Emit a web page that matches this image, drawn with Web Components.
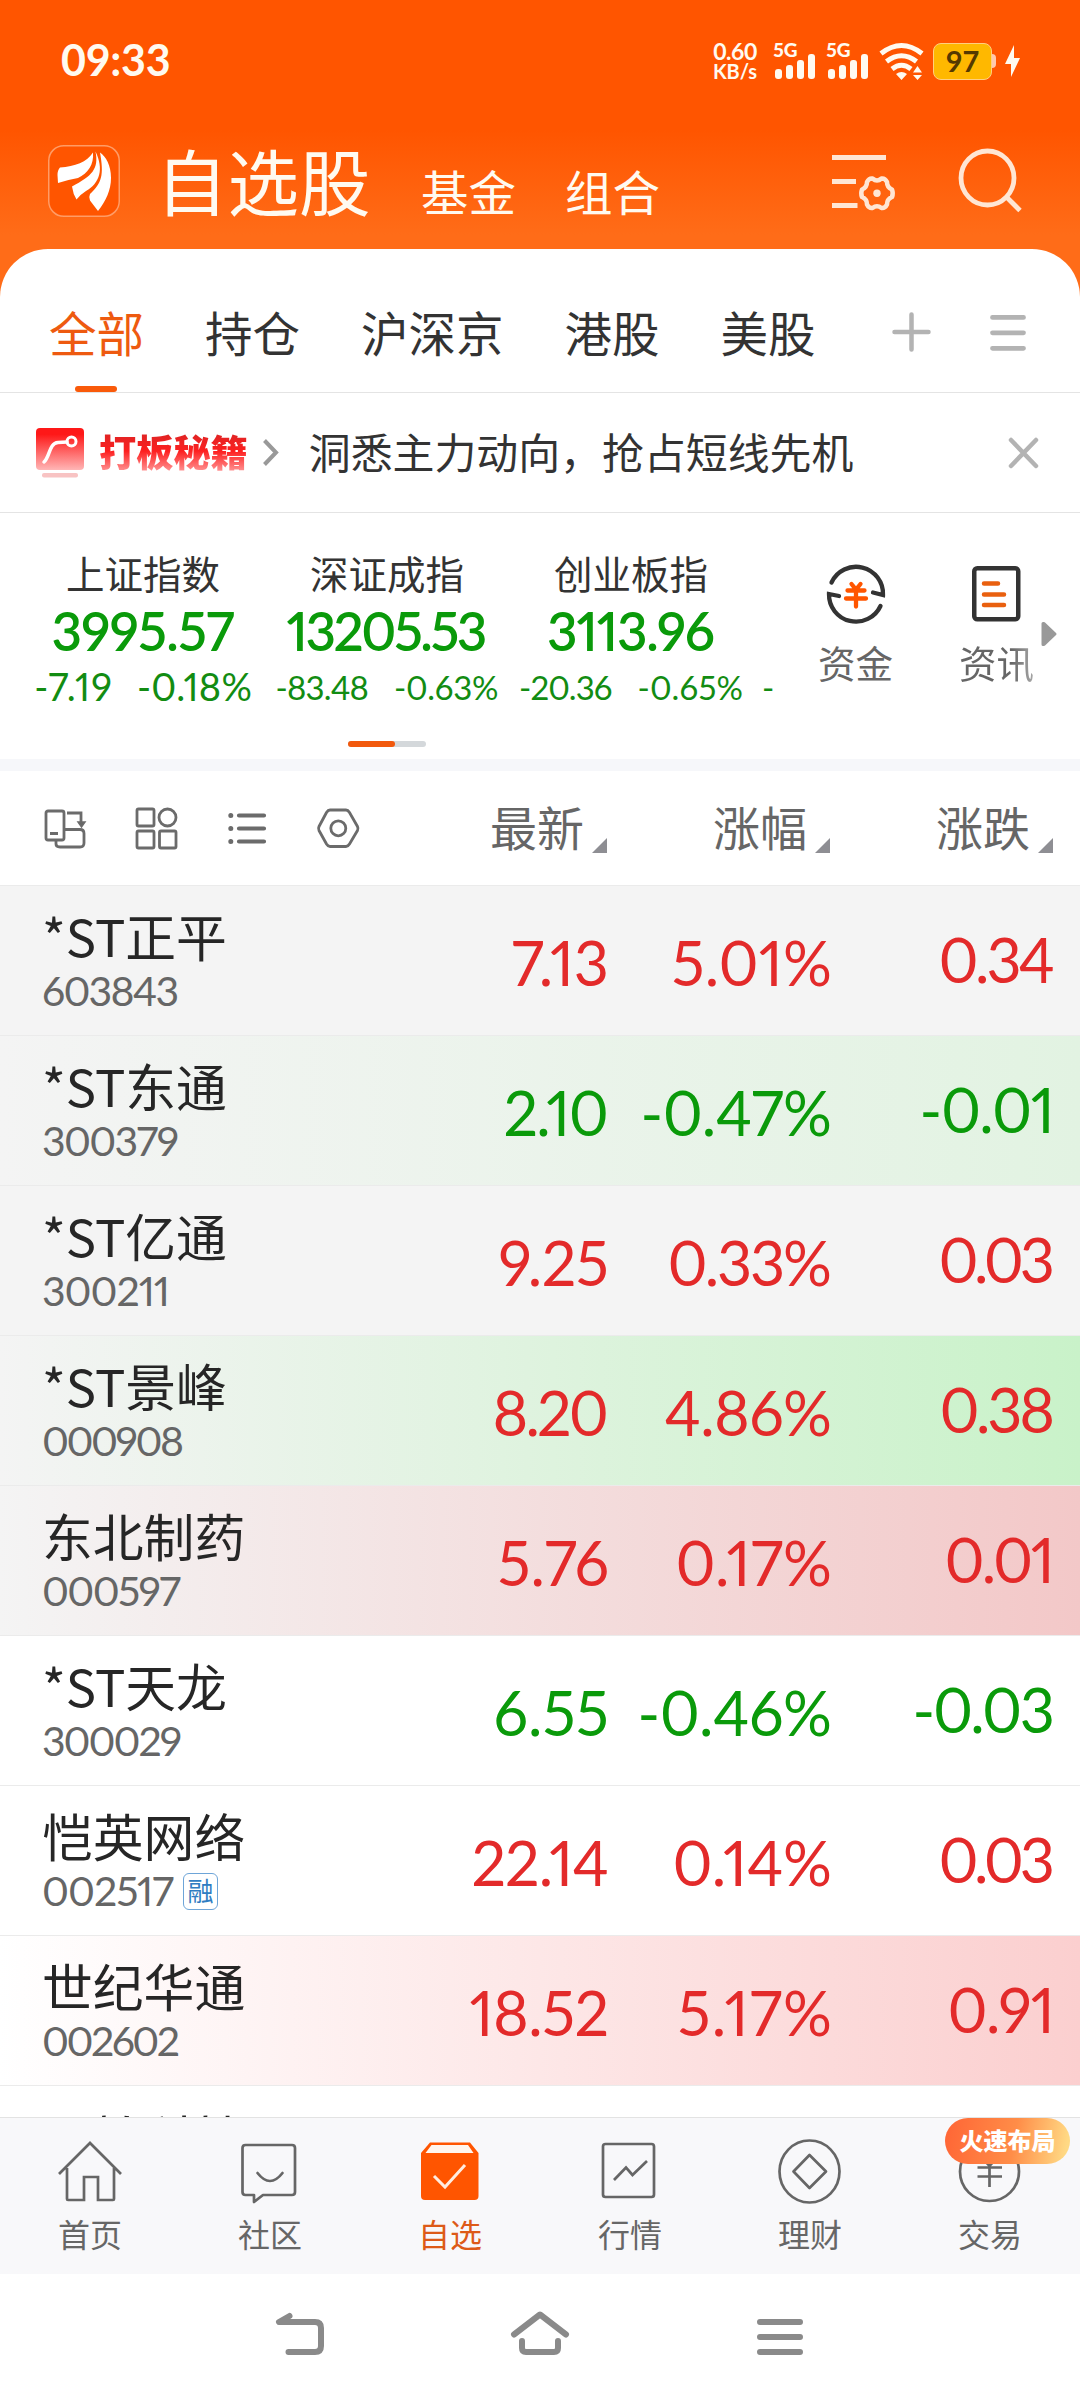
<!DOCTYPE html>
<html lang="zh-CN">
<head>
<meta charset="utf-8">
<title>自选股</title>
<style>
  body {
    margin: 0;
    width: 1080px;
    height: 2400px;
    overflow: hidden;
    background: #fff;
    color: #333;
    font-family: "Noto Sans CJK SC", sans-serif;
    --num: Lato, "Noto Sans CJK SC", sans-serif;
    --orange: #ee5a10;
    --up: #e32a2a;
    --down: #0a9a0a;
  }
</style>
</head>
<body>
<stock-app></stock-app>

<script>
class BaseElement extends HTMLElement {
  constructor() {
    super();
    this.shadow = this.attachShadow({ mode: "open" });
  }

  attr(name) {
    return this.getAttribute(name) || '';
  }

  connectedCallback() {
    this.shadow.innerHTML = `
      <style>
        :host { display: block; box-sizing: border-box; }
        * { box-sizing: border-box; }
        svg { display: block; overflow: visible; flex: none; }
        ${this.renderStyle()}
      </style>
      ${this.renderHTML()}
    `;
  }

  renderStyle() {
    return '';
  }
}

// number that is tracked in or out to fill the given ink width
class FitNum extends BaseElement {
  connectedCallback() {
    super.connectedCallback();
    const width = Number(this.attr('w'));
    const text = this.shadow.querySelector('span');
    if (!width || text.textContent.length < 2) return;
    const bearing = parseFloat(getComputedStyle(this).fontSize) * 0.075;
    const spacing = (width + bearing - text.getBoundingClientRect().width) / (text.textContent.length - 1);
    text.style.letterSpacing = spacing + 'px';
    text.style.marginRight = -spacing + 'px';
  }

  renderStyle() {
    return `
      :host { display: inline-block; white-space: nowrap; font-variant-numeric: proportional-nums; }
      span { display: inline-block; }
    `;
  }

  renderHTML() {
    return `<span>${this.attr('value')}</span>`;
  }
}
customElements.define("fit-num", FitNum);

// "7.13/93" -> value and ink width
function num(pair) {
  const [value, w] = (pair || '').split('/');
  return value ? `<fit-num value="${value}" w="${w}"></fit-num>` : '';
}

class StatusBar extends BaseElement {
  renderStyle() {
    return `
      :host {
        display: flex;
        align-items: center;
        height: 122px;
        padding: 0 60px 0 61px;
        color: #fffaf0;
        font-family: var(--num);
        font-weight: 700;
      }
      .time { flex: 1; font-size: 43px; line-height: 50px; letter-spacing: -.3px; margin-top: -2px; }
      .speed { width: 48px; text-align: center; line-height: 20px; font-size: 23px; margin-right: 14px; letter-spacing: -.5px; }
      .speed small { display: block; font-size: 20px; letter-spacing: 0; }
      .signal { width: 53px; height: 36px; }
      .signal div { font-size: 19px; line-height: 14px; height: 10px; letter-spacing: -.3px; font-weight: 900; }
      .wifi { margin: 0 9px 0 0; }
      .battery {
        width: 59px;
        height: 37px;
        border-radius: 8px;
        border: 1px solid #ffcf80;
        background: #ffb800;
        color: #553900;
        font-size: 29px;
        line-height: 34px;
        text-align: center;
      }
      .nub { width: 4px; height: 14px; background: #ffc9ad; border-radius: 0 4px 4px 0; margin-right: 9px; }
    `;
  }

  renderSignal() {
    return `
      <div class="signal">
        <div>5G</div>
        <svg width="44" height="26" viewBox="0 0 44 26" fill="#fffaf0">
          <rect x="2" y="16" width="7" height="10" rx="3"/>
          <rect x="13" y="12" width="7" height="14" rx="3"/>
          <rect x="24" y="7" width="7" height="19" rx="3"/>
          <rect x="35" y="1" width="7" height="25" rx="3"/>
        </svg>
      </div>
    `;
  }

  renderHTML() {
    return `
      <div class="time">09:33</div>
      <div class="speed">0.60<small>KB/s</small></div>
      ${this.renderSignal()}
      ${this.renderSignal()}
      <svg class="wifi" width="45" height="37" viewBox="0 0 45 37" fill="none" stroke="#fffaf0" stroke-width="5">
        <path d="M2 10.5Q22.500 -5.500 43 10.500M7.500 18.500Q22.500 7 37.500 18.500M13 26Q22.500 18.500 32 26"/>
        <path d="M17 31Q22.500 27 28 31L22.500 37ZM34 29.500L38.500 23L43 29.500ZM34 32L38.500 37L43 32Z" fill="#fffaf0" stroke="none"/>
      </svg>
      <div class="battery">97</div>
      <div class="nub"></div>
      <svg width="15" height="32" viewBox="0 0 15 32" fill="#fffaf0"><path d="M9 0V13H15L6 32V19H0Z"/></svg>
    `;
  }
}
customElements.define("status-bar", StatusBar);

class AppHeader extends BaseElement {
  renderStyle() {
    return `
      :host { display: flex; align-items: flex-start; height: 127px; padding: 0 60px 0 48px; color: #fffaf0; }
      .logo { margin-top: 23px; }
      h1 { margin: 22px 0 0 36px; font-size: 71.500px; line-height: 70px; font-weight: 400; width: 216px; flex: none; white-space: nowrap; }
      span { font-size: 47.500px; line-height: 48px; margin: 45px 0 0 49px; width: 95px; flex: none; }
      .gear { margin: 32px 0 0 172px; }
      .search { margin: 26px 0 0 64px; }
    `;
  }

  renderHTML() {
    return `
      <svg class="logo" width="72" height="72" viewBox="0 0 72 72">
        <rect x=".75" y=".75" width="70.500" height="70.500" rx="15" fill="#ff5500" stroke="#ff9c66" stroke-width="1.500"/>
        <g fill="#fff">
          <path d="M45 7.500C39 17 27 21.500 12 22.500Q9.500 25 9.500 30L10 38Q21 34.500 30 33C40 28 46 20 45 7.500Z"/>
          <path d="M47.500 6.500C51 24 44 31 24 41.500Q25 49 28.500 54.500Q33 49 38 46C52 38 56 24 47.500 6.500Z"/>
          <path d="M52 7.500C56 30 54 38 42 49Q40.500 52 42 55.500L50 66C58 56 63 45 63 33C63 20 58 12 52 7.500Z"/>
        </g>
      </svg>
      <h1>自选股</h1>
      <span>基金</span>
      <span>组合</span>
      <svg class="gear" width="63" height="60" viewBox="0 0 63 60" fill="none" stroke="#ffe6d4" stroke-width="5">
        <path d="M0 3.500H54M0 27.500H24M0 51.500H25.500"/>
        <path stroke-width="4.500" stroke-linejoin="round" d="M40.500 24.500Q45 28.500 49.500 24.500Q53 24 55 28Q55 33.500 60 35.500Q61.500 39.500 60 43Q55 45 55 50.500Q53 54.500 49.500 54Q45 50.500 40.500 54Q37 54.500 35 50.500Q35 45 30 43Q28.500 39.500 30 35.500Q35 33.500 35 28Q37 24 40.500 24.500Z"/>
        <circle cx="45" cy="39.300" r="3.700" fill="#ffe6d4" stroke="none"/>
      </svg>
      <svg class="search" width="64" height="66" viewBox="0 0 64 66" fill="none" stroke="#ffe6d4" stroke-width="4.800">
        <ellipse cx="28.500" cy="30" rx="26.500" ry="27"/>
        <path d="M47 48.500L61 62.500"/>
      </svg>
    `;
  }
}
customElements.define("app-header", AppHeader);

class FilterTabs extends BaseElement {
  renderStyle() {
    return `
      :host {
        display: flex;
        height: 144px;
        background: #fff;
        border-radius: 48px 48px 0 0;
        border-bottom: 1px solid #e4e4e4;
        padding: 0 53px 0 49px;
        font-size: 47.500px;
      }
      div { display: flex; flex-direction: column; align-items: center; justify-content: flex-end; margin-right: 61px; }
      b { font-weight: 400; line-height: 60px; height: 60px; margin-bottom: 24px; white-space: nowrap; }
      i { width: 42px; height: 6px; border-radius: 3px; }
      .on { color: var(--orange); }
      .on i { background: #f95a0a; margin-right: 1px; }
      .add { margin: 63px 59px 0 15px; }
      .menu { margin-top: 66px; }
    `;
  }

  renderHTML() {
    const tabs = ['全部', '持仓', '沪深京', '港股', '美股'];
    return `
      ${tabs.map((t, i) => `<div class="${i === 0 ? 'on' : ''}"><b>${t}</b><i></i></div>`).join('')}
      <svg class="add" width="39" height="40" viewBox="0 0 39 40" stroke="#b3b3b3" stroke-width="4.500" stroke-linecap="round"><path d="M2.500 20H36.500M19.500 2.500V37.500"/></svg>
      <svg class="menu" width="36" height="36" viewBox="0 0 36 36" stroke="#b3b3b3" stroke-width="4.800" stroke-linecap="round"><path d="M2.500 2.400H33.500M2.500 17.800H33.500M2.500 33.300H33.500"/></svg>
    `;
  }
}
customElements.define("filter-tabs", FilterTabs);

class PromoBanner extends BaseElement {
  renderStyle() {
    return `
      :host { display: flex; align-items: center; height: 120px; border-bottom: 1px solid #e4e4e4; padding: 0 42px 0 36px; }
      b {
        margin: -3px 15px 0 15px;
        font-size: 37.200px;
        font-weight: 900;
        line-height: 56px;
        background: linear-gradient(#e02424 20%, #fd1f1f 50%, #ff8f8f 85%);
        -webkit-background-clip: text;
        color: transparent;
      }
      span { flex: 1; margin-left: 31px; font-size: 41.900px; line-height: 60px; margin-top: -4px; }
    `;
  }

  renderHTML() {
    return `
      <svg width="48" height="50" viewBox="0 0 48 50">
        <defs><linearGradient id="g" x1="0" y1="0" x2="0" y2="1"><stop offset=".15" stop-color="#fe1818"/><stop offset="1" stop-color="#ffb6b6"/></linearGradient></defs>
        <rect width="48" height="42" rx="4" fill="url(#g)"/>
        <rect x="6" y="45" width="36" height="4.500" rx="2" fill="#f8c3c3"/>
        <path d="M8 34C14 29 13 15 22 14.500L31 14" fill="none" stroke="#fff" stroke-width="3.500" stroke-linecap="round"/>
        <circle cx="35.500" cy="13.500" r="4.500" fill="none" stroke="#fff" stroke-width="3"/>
      </svg>
      <b>打板秘籍</b>
      <svg width="15" height="27" viewBox="0 0 15 27" fill="none" stroke="#999" stroke-width="4"><path d="M1.500 1.500L13 13.500L1.500 25.500"/></svg>
      <span>洞悉主力动向，抢占短线先机</span>
      <svg width="29" height="30" viewBox="0 0 29 30" stroke="#b3b3b3" stroke-width="4.500" stroke-linecap="round"><path d="M2 2L27 28M27 2L2 28"/></svg>
    `;
  }
}
customElements.define("promo-banner", PromoBanner);

class IndexCard extends BaseElement {
  renderStyle() {
    return `
      :host { width: 244px; flex: none; text-align: center; font-family: var(--num); color: #128c12; }
      p { margin: 0; font: 38.500px/48px "Noto Sans CJK SC", sans-serif; color: #333; }
      strong { display: block; font-size: 53px; line-height: 60px; margin-top: 5px; font-weight: 600; color: var(--down); }
      div { display: flex; justify-content: center; gap: 25px; line-height: 44px; height: 44px; margin-top: 2px; font-size: 33px; padding-top: 2px; }
      :host([big]) div { font-size: 38px; padding-top: 1px; }
    `;
  }

  renderHTML() {
    return `
      <p>${this.attr('name')}</p>
      <strong>${num(this.attr('value'))}</strong>
      <div>${num(this.attr('diff'))}${num(this.attr('rate'))}</div>
    `;
  }
}
customElements.define("index-card", IndexCard);

class IndexStrip extends BaseElement {
  renderStyle() {
    return `
      :host { height: 258px; border-bottom: 12px solid #f6f7fa; padding-top: 25px; }
      .row { display: flex; }
      .cards { display: flex; width: 776px; padding: 10px 0 0 21px; overflow: hidden; height: 182px; flex: none; }
      .next { font: 33px/44px var(--num); color: #128c12; padding: 117px 0 0 9px; flex: none; }
      .tool { width: 141px; text-align: center; font-size: 37.500px; line-height: 50px; color: #666; flex: none; }
      .tool svg { margin: 26px auto 13px; }
      .tool:nth-child(2) { margin-left: 9px; }
      .fade { background: linear-gradient(90deg, #666 70%, #a5a5a5 98%); -webkit-background-clip: text; color: transparent; }
      .dots { width: 78px; height: 6px; border-radius: 3px; margin: 21px 0 0 348px; background: #d4d8db; }
      .dots i { display: block; width: 47px; height: 6px; border-radius: 3px; background: #f2590d; }
      .more { margin: 83px 0 0 -26px; }
    `;
  }

  renderHTML() {
    return `
      <div class="row">
        <div class="cards">
          <index-card big name="上证指数" value="3995.57/179" diff="-7.19/75" rate="-0.18%/112"></index-card>
          <index-card name="深证成指" value="13205.53/197" diff="-83.48/91" rate="-0.63%/102"></index-card>
          <index-card name="创业板指" value="3113.96/164" diff="-20.36/91" rate="-0.65%/103"></index-card>
          <span class="next">-</span>
        </div>
        <div class="tool">
          <svg width="60" height="60" viewBox="0 0 60 60" fill="none" stroke="#333" stroke-width="4.300" stroke-linecap="round" stroke-linejoin="miter">
            <path d="M5.500 18.500A27 27 0 0 1 57 31L47 28.500M54.500 42A27 27 0 0 1 3 30L13 32"/>
            <path d="M25.500 20L30 25.500L34.500 20M21.500 26.500H38.500M20 34.500H40M30 25.500V42.500" stroke="#ff5500"/>
          </svg>
          资金
        </div>
        <div class="tool">
          <svg width="49" height="60" viewBox="0 0 49 60" fill="none" stroke="#333" stroke-width="4.500" stroke-linecap="round">
            <rect x="2.250" y="4.250" width="44" height="51" rx="3"/>
            <path d="M12 19.500H26M12 30.500H32M12 41H32" stroke="#e9600f"/>
          </svg>
          <span class="fade">资讯</span>
        </div>
        <svg class="more" width="16" height="26" viewBox="0 0 16 26" fill="#999" stroke="#999" stroke-width="3" stroke-linejoin="round"><path d="M2 2.500L3 2.500L14 13L3 23.500L2 23.500Z"/></svg>
      </div>
      <div class="dots"><i></i></div>
    `;
  }
}
customElements.define("index-strip", IndexStrip);

class ListToolbar extends BaseElement {
  renderStyle() {
    return `
      :host { display: flex; align-items: center; height: 114px; padding: 0 26px 0 44px; color: #666; font-size: 47px; }
      .icon { width: 43px; margin-right: 48px; flex: none; }
      .col { display: flex; align-items: flex-end; width: 118px; margin: -5px 0 0 105px; flex: none; line-height: 60px; white-space: nowrap; }
      .icon + .col { margin-left: 82px; }
      .col svg { margin: 0 0 3px 8px; }
    `;
  }

  renderHTML() {
    const icons = [
      '<rect x="2" y="4" width="18" height="29" rx="2"/><path d="M6 26.500H14M20 22.500H36Q40 22.500 40 26.500V36Q40 40 36 40H16Q12 40 12 37V33M23 6H37V16"/><path d="M34 15H41L37.500 20Z" fill="#666" stroke-width="1.500"/>',
      '<rect x="2" y="2" width="17" height="17" rx="1.500"/><circle cx="32.500" cy="10.500" r="8.500"/><rect x="2" y="24" width="17" height="17" rx="1.500"/><rect x="24.500" y="24" width="16.500" height="17" rx="1.500"/>',
      '<path d="M13 8.500H38M13 21.500H38M13 34.500H38" stroke-width="4.200" stroke-linecap="round"/><path d="M4.800 8.500V8.600M4.800 21.500V21.600M4.800 34.500V34.600" stroke-width="5" stroke-linecap="round"/>',
      '<path stroke-linejoin="round" d="M13 3H29Q31 3 32.500 5.500L40.500 19.500Q41.500 21.500 40.500 23.500L32.500 37Q31 39.500 29 39.500H13Q11 39.500 9.500 37L2 23.500Q1 21.500 2 19.500L9.500 5.500Q11 3 13 3Z"/><circle cx="21.300" cy="21.300" r="7.500"/>'
    ];
    const cols = ['最新', '涨幅', '涨跌'];
    return `
      ${icons.map(d => `<div class="icon"><svg width="43" height="43" viewBox="0 0 43 43" fill="none" stroke="#6b6b6b" stroke-width="2.800">${d}</svg></div>`).join('')}
      ${cols.map(c => `<div class="col">${c}<svg width="15" height="15" viewBox="0 0 15 15" fill="#8e8e93"><path d="M15 0V15H0Z"/></svg></div>`).join('')}
    `;
  }
}
customElements.define("list-toolbar", ListToolbar);

class StockRow extends BaseElement {
  renderStyle() {
    return `
      :host {
        display: flex;
        height: 150px;
        border-top: 1px solid #ebebeb;
        padding: 0 25px 0 42px;
        background: linear-gradient(90deg, var(--from, #fff), var(--to, var(--from, #fff)));
        color: var(--up);
        font-family: var(--num);
      }
      .who { flex: 1; }
      .name { font: 50.800px/60px "Noto Sans CJK SC", sans-serif; color: #262626; margin-top: 19px; }
      .code { display: flex; align-items: center; font-size: 41px; line-height: 46px; margin-top: 3px; color: #666; }
      .tag {
        width: 35px;
        height: 37px;
        border: 1.500px solid #6ea5d8;
        border-radius: 6px;
        margin-left: 9px;
        color: #2f7dc2;
        font: 26px/32px "Noto Sans CJK SC", sans-serif;
        text-align: center;
      }
      .num { width: 223px; text-align: right; font-size: 61px; line-height: 70px; margin-top: 42px; }
      .num:last-child { margin-top: 39px; }
      :host([down]) .num { color: var(--down); }
    `;
  }

  renderHTML() {
    const [price, rate, diff] = this.attr('nums').split(' ');
    return `
      <div class="who">
        <div class="name">${this.attr('name')}</div>
        <div class="code">${num(this.attr('code'))}${this.hasAttribute('tag') ? `<span class="tag">${this.attr('tag')}</span>` : ''}</div>
      </div>
      <div class="num">${num(price)}</div>
      <div class="num">${num(rate)}</div>
      <div class="num">${num(diff)}</div>
    `;
  }
}
customElements.define("stock-row", StockRow);

class StockList extends BaseElement {
  renderStyle() {
    return `
      :host { height: 1232px; overflow: hidden; }
      .held { --from: #f4f4f4; }
    `;
  }

  renderHTML() {
    return `
      <stock-row class="held" name="*ST正平" code="603843/134" nums="7.13/93 5.01%/156 0.34/112"></stock-row>
      <stock-row class="held" style="--to: #e2f3e2" down name="*ST东通" code="300379/134" nums="2.10/101 -0.47%/187 -0.01/131"></stock-row>
      <stock-row class="held" name="*ST亿通" code="300211/125" nums="9.25/106 0.33%/160 0.03/112"></stock-row>
      <stock-row class="held" style="--to: #c9f2c9" name="*ST景峰" code="000908/139" nums="8.20/112 4.86%/163 0.38/111"></stock-row>
      <stock-row class="held" style="--to: #f3c8c8" name="东北制药" code="000597/136" nums="5.76/107 0.17%/152 0.01/106"></stock-row>
      <stock-row down name="*ST天龙" code="300029/137" nums="6.55/111 -0.46%/190 -0.03/138"></stock-row>
      <stock-row name="恺英网络" code="002517/129" tag="融" nums="22.14/133 0.14%/155 0.03/112"></stock-row>
      <stock-row style="--to: #fbcfcf" name="世纪华通" code="002602/135" nums="18.52/135 5.17%/150 0.91/103"></stock-row>
      <stock-row style="padding-top: 2px" name="雷柏科技"></stock-row>
    `;
  }
}
customElements.define("stock-list", StockList);

class TabItem extends BaseElement {
  renderStyle() {
    return `
      :host { position: relative; width: 180px; color: #666; text-align: center; font-size: 32px; line-height: 44px; }
      :host([active]) { color: #dd5a18; }
      svg { margin: 21px auto 6px; }
      ::slotted(*) { position: absolute; top: 0; left: 45px; }
    `;
  }

  renderHTML() {
    const icons = {
      home: '<path d="M2 35L33 4L64 35M10 29V60Q10 61 11 61H27V38H41V61H56Q57 61 57 60V29"/>',
      chat: '<path stroke-linejoin="round" d="M8.500 6H55Q58 6 58 9V53Q58 56 55 56H26L17 63V56H8.500Q5.500 56 5.500 53V9Q5.500 6 8.500 6Z"/><path d="M20.500 34Q33 50 45.500 34" stroke-linecap="round"/>',
      star: '<path d="M4 14L13 3.500H53L61.500 14V57Q61.500 61 57.500 61H8Q4 61 4 57Z" fill="#ff5500" stroke="none"/><path d="M14.500 6H51L56.500 14H8.500Z" fill="#fff6ee" stroke="none"/><path d="M17 37L28 48L48 26" stroke="#ffece0" stroke-width="3"/>',
      chart: '<rect x="6" y="5" width="51" height="53" rx="2.500"/><path d="M17 41L29 28.500L35.500 36L50 22"/>',
      money: '<ellipse cx="32.500" cy="32.500" rx="30" ry="31"/><path stroke-linejoin="round" d="M32.500 16L49 32.500L32.500 49L16.500 32.500Z"/>',
      trade: '<circle cx="32.500" cy="32.500" r="29.500"/><path d="M22 15L32.500 27L43 15M20.500 28.500H45M20.500 37.500H45M32.500 27V48"/>'
    };
    return `
      <svg width="66" height="66" viewBox="0 0 66 66" fill="none" stroke="#666" stroke-width="2.700">${icons[this.attr('icon')]}</svg>
      ${this.attr('label')}
      <slot></slot>
    `;
  }
}
customElements.define("tab-item", TabItem);

class TabBar extends BaseElement {
  renderStyle() {
    return `
      :host { display: flex; height: 157px; background: #f8f8fa; border-top: 1px solid #e3e3e3; }
      .badge {
        width: 125px;
        height: 46px;
        border-radius: 24px;
        background: linear-gradient(100deg, #ff6535, #ff8d48 55%, #ffd984 95%);
        color: #fff;
        font-size: 24px;
        font-weight: 900;
        line-height: 44px;
      }
    `;
  }

  renderHTML() {
    return `
      <tab-item icon="home" label="首页"></tab-item>
      <tab-item icon="chat" label="社区"></tab-item>
      <tab-item icon="star" label="自选" active></tab-item>
      <tab-item icon="chart" label="行情"></tab-item>
      <tab-item icon="money" label="理财"></tab-item>
      <tab-item icon="trade" label="交易"><span class="badge">火速布局</span></tab-item>
    `;
  }
}
customElements.define("tab-bar", TabBar);

class SystemNav extends BaseElement {
  renderStyle() {
    return `
      :host { display: flex; justify-content: center; gap: 180px; height: 126px; padding-top: 31px; }
    `;
  }

  renderHTML() {
    const icons = [
      'M19.500 11L9 17H45Q51 17 51 23V41Q51 47 45 47H18.500',
      'M4 29.500L30 9.500L56 29.500M12 36V43Q12 47 16 47H44Q48 47 48 43V36',
      'M10 17H50M10 32H50M10 47H50'
    ];
    return icons.map(d => `<svg width="60" height="60" viewBox="0 0 60 60" fill="none" stroke="#8a8a8a" stroke-width="6" stroke-linecap="round" stroke-linejoin="round"><path d="${d}"/></svg>`).join('');
  }
}
customElements.define("system-nav", SystemNav);

class StockApp extends BaseElement {
  renderStyle() {
    return `
      .top { background: linear-gradient(#ff5500 130px, #ff6c18 235px, #ff6c18); }
    `;
  }

  renderHTML() {
    return `
      <div class="top">
        <status-bar></status-bar>
        <app-header></app-header>
        <filter-tabs></filter-tabs>
      </div>
      <promo-banner></promo-banner>
      <index-strip></index-strip>
      <list-toolbar></list-toolbar>
      <stock-list></stock-list>
      <tab-bar></tab-bar>
      <system-nav></system-nav>
    `;
  }
}
customElements.define("stock-app", StockApp);
</script>
</body>
</html>
